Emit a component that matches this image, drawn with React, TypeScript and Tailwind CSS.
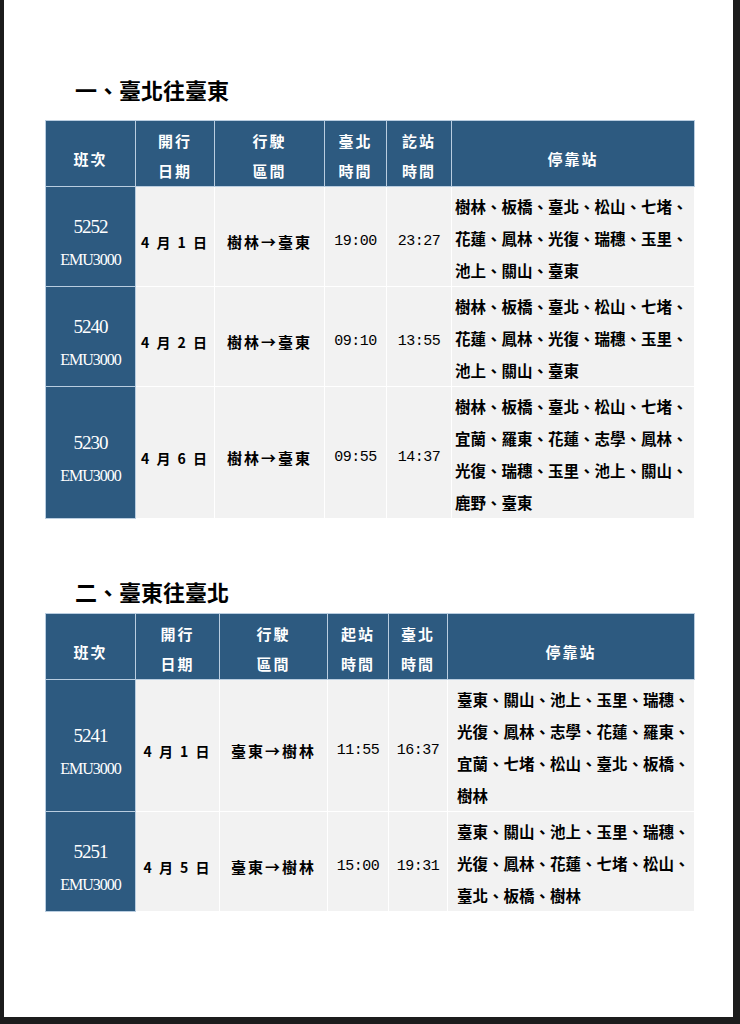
import React from 'react';

type Row = {
  no: string;
  date: string;
  route: string;
  t1: string;
  t2: string;
  stops: string[];
};

type Section = {
  title: string;
  heads: [string, string][];
  cols: number[];
  stopPad: string;
  titleGap: string;
  rows: Row[];
};

const toTaitung = [
  '樹林、板橋、臺北、松山、七堵、',
  '花蓮、鳳林、光復、瑞穗、玉里、',
  '池上、關山、臺東',
];

const sections: Section[] = [
  {
    title: '一、臺北往臺東',
    heads: [
      ['開行', '日期'],
      ['行駛', '區間'],
      ['臺北', '時間'],
      ['訖站', '時間'],
    ],
    cols: [90, 79, 110, 62, 65, 243],
    stopPad: 'pl-[3px]',
    titleGap: 'mb-[16px]',
    rows: [
      { no: '5252', date: '4 月 1 日', route: '樹林→臺東', t1: '19:00', t2: '23:27', stops: toTaitung },
      { no: '5240', date: '4 月 2 日', route: '樹林→臺東', t1: '09:10', t2: '13:55', stops: toTaitung },
      {
        no: '5230',
        date: '4 月 6 日',
        route: '樹林→臺東',
        t1: '09:55',
        t2: '14:37',
        stops: [
          '樹林、板橋、臺北、松山、七堵、',
          '宜蘭、羅東、花蓮、志學、鳳林、',
          '光復、瑞穗、玉里、池上、關山、',
          '鹿野、臺東',
        ],
      },
    ],
  },
  {
    title: '二、臺東往臺北',
    heads: [
      ['開行', '日期'],
      ['行駛', '區間'],
      ['起站', '時間'],
      ['臺北', '時間'],
    ],
    cols: [90, 84, 108, 61, 59, 247],
    stopPad: 'pl-[9px]',
    titleGap: 'mb-[7px]',
    rows: [
      {
        no: '5241',
        date: '4 月 1 日',
        route: '臺東→樹林',
        t1: '11:55',
        t2: '16:37',
        stops: [
          '臺東、關山、池上、玉里、瑞穗、',
          '光復、鳳林、志學、花蓮、羅東、',
          '宜蘭、七堵、松山、臺北、板橋、',
          '樹林',
        ],
      },
      {
        no: '5251',
        date: '4 月 5 日',
        route: '臺東→樹林',
        t1: '15:00',
        t2: '19:31',
        stops: [
          '臺東、關山、池上、玉里、瑞穗、',
          '光復、鳳林、花蓮、七堵、松山、',
          '臺北、板橋、樹林',
        ],
      },
    ],
  },
];

const blueCell = 'bg-[#2d5a80] text-white border border-[#b9cde0]';
const grayCell = 'bg-[#f2f2f2] text-black border border-white align-middle text-center';

function Timetable({ s }: { s: Section }) {
  return (
    <table className="table-fixed border-collapse w-[649px]">
      <colgroup>
        {s.cols.map((w, i) => (
          <col key={i} style={{ width: w }} />
        ))}
      </colgroup>
      <thead>
        <tr className="h-[66px]">
          <th className={`${blueCell} pt-[11px] align-middle text-[15px] font-bold leading-[30px] tracking-[2px]`}>班次</th>
          {s.heads.map(([a, b]) => (
            <th key={a + b} className={`${blueCell} pt-[5px] align-middle text-[15px] font-bold leading-[30px] tracking-[2px]`}>
              {a}
              <br />
              {b}
            </th>
          ))}
          <th className={`${blueCell} pt-[11px] align-middle text-[15px] font-bold leading-[30px] tracking-[2px]`}>停靠站</th>
        </tr>
      </thead>
      <tbody>
        {s.rows.map((r) => (
          <tr key={r.no}>
            <td className={`${blueCell} pt-[12px] text-center align-middle font-['Liberation_Serif',serif] leading-[33px]`}>
              <div className="text-[19px] tracking-[-1px]">{r.no}</div>
              <div className="text-[16px] tracking-[-1px]">EMU3000</div>
            </td>
            <td className={`${grayCell} pt-[12px] text-[14px] font-bold whitespace-pre tracking-[2px]`}>{r.date}</td>
            <td className={`${grayCell} pt-[12px] text-[15px] font-bold tracking-[2px]`}>{r.route}</td>
            <td className={`${grayCell} pt-[12px] text-[15px] tracking-[-0.5px] font-['Liberation_Mono',monospace]`}>{r.t1}</td>
            <td className={`${grayCell} pt-[12px] text-[15px] tracking-[-0.5px] font-['Liberation_Mono',monospace]`}>{r.t2}</td>
            <td className={`bg-[#f2f2f2] text-black border border-white align-top pt-[3px] ${s.stopPad} text-left text-[15.5px] font-bold leading-[32px]`}>
              {r.stops.map((line) => (
                <div key={line} className="whitespace-nowrap">
                  {line}
                </div>
              ))}
            </td>
          </tr>
        ))}
      </tbody>
    </table>
  );
}

export default function App() {
  return (
    <div className="box-border w-[740px] h-[1024px] bg-white border-l-4 border-r-[7px] border-b-[7px] border-[#1c1c1c] pt-[74px] pl-[41px] font-['Noto_Sans_CJK_TC',sans-serif]">
      {sections.map((s, i) => (
        <section key={s.title} className={i > 0 ? 'mt-[57px]' : ''}>
          <h2 className={`ml-[30px] text-[22px] leading-[30px] font-bold text-black ${s.titleGap}`}>{s.title}</h2>
          <Timetable s={s} />
        </section>
      ))}
    </div>
  );
}
